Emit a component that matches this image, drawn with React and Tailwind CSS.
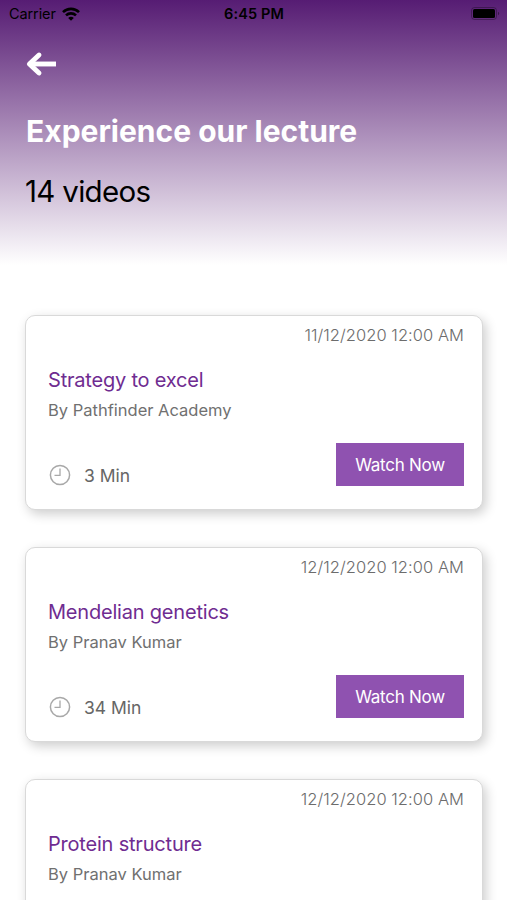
const lectures = [
  { id: 1, title: "Strategy to excel", author: "Pathfinder Academy", date: "11/12/2020 12:00 AM", duration: "3 Min" },
  { id: 2, title: "Mendelian genetics", author: "Pranav Kumar", date: "12/12/2020 12:00 AM", duration: "34 Min" },
  { id: 3, title: "Protein structure", author: "Pranav Kumar", date: "12/12/2020 12:00 AM" },
];

function WifiIcon() {
  return (
    <svg width="18" height="14" viewBox="0 0 18 14" fill="none" stroke="currentColor" strokeWidth="2.6">
      <path d="M1 5.1a11.5 11.5 0 0 1 16 0" />
      <path d="M4 8.4a7.2 7.2 0 0 1 10 0" />
      <path d="M9 13.8 6.2 11a3.9 3.9 0 0 1 5.6 0z" fill="currentColor" stroke="none" />
    </svg>
  );
}

function BatteryIcon() {
  return (
    <svg width="29" height="13" viewBox="0 0 29 13" fill="none">
      <rect x="0.5" y="0.5" width="25" height="12" rx="3" stroke="#000" strokeOpacity="0.3" />
      <rect x="2" y="2" width="22" height="9" rx="1.5" fill="#000" />
      <path d="M27 4.7v3.6c1.6-.6 1.6-3 0-3.6z" fill="#000" fillOpacity="0.4" />
    </svg>
  );
}

function BackIcon() {
  return (
    <svg width="32" height="26" viewBox="0 0 32 26" fill="none" stroke="#fff" strokeWidth="4.9">
      <path d="M31 13H5" />
      <path d="M14 4 4.4 13l9.6 9" strokeLinecap="round" strokeLinejoin="round" />
    </svg>
  );
}

function ClockIcon() {
  return (
    <svg width="22" height="22" viewBox="0 0 22 22" fill="none" stroke="#a8a8a8" strokeWidth="1.5">
      <circle cx="11" cy="11" r="9.6" />
      <path d="M11 4.5V11.3H5.5" strokeWidth="1.3" />
    </svg>
  );
}

function StatusBar() {
  return (
    <div className="grid grid-cols-3 items-center h-[27px] pl-[9px] pr-[7px] text-black">
      <div className="flex items-center gap-1.5">
        <span className="text-[14.5px] tracking-[-0.1px]">Carrier</span>
        <WifiIcon />
      </div>
      <span className="text-center text-[14.5px] tracking-[0.1px] font-semibold -ml-px">6:45 PM</span>
      <div className="flex justify-end">
        <BatteryIcon />
      </div>
    </div>
  );
}

function LectureCard({ lecture }) {
  return (
    <div className="h-[195px] shrink-0 bg-white border border-[#d9d9d9] rounded-[10px] shadow-[3px_4px_12px_rgba(0,0,0,0.2)] pl-[22px] pr-[18px] pt-[7px] flex flex-col">
      <p className="text-right text-[16.5px] tracking-[0.05px] leading-6 font-light text-[#6c6c6c]">{lecture.date}</p>
      <h2 className="mt-[19px] text-[20px] tracking-[-0.2px] leading-7 text-[#6f2c91]">{lecture.title}</h2>
      <p className="mt-1 text-[16.5px] leading-6 text-[#707070]">By {lecture.author}</p>
      {lecture.duration && (
        <div className="mt-[21px] flex justify-between">
          <div className="flex items-center pt-[22px] pl-px gap-[13px] h-[42px]">
            <ClockIcon />
            <span className="pt-0.5 text-[17.5px] text-[#666666]">{lecture.duration}</span>
          </div>
          <button className="w-[128px] h-[43px] pt-0.5 bg-[#8f52b0] text-white text-[17px] tracking-[-0.25px]">Watch Now</button>
        </div>
      )}
    </div>
  );
}

export default function App() {
  return (
    <div className="h-[900px] overflow-hidden bg-white font-[Inter,sans-serif] flex flex-col">
      <header className="h-[315px] shrink-0 bg-[linear-gradient(to_bottom,#561c73_0px,#9671a8_100px,#ffffff_265px)]">
        <StatusBar />
        <div className="px-[25px] pt-6">
          <BackIcon />
          <h1 className="mt-[34px] pl-px text-[30px] leading-10 font-bold text-white">Experience our lecture</h1>
          <p className="mt-5 text-[29.5px] tracking-[-0.7px] leading-10 text-black">14 videos</p>
        </div>
      </header>
      <main className="flex flex-col gap-[37px] pl-[25px] pr-6">
        {lectures.map((lecture) => (
          <LectureCard key={lecture.id} lecture={lecture} />
        ))}
      </main>
    </div>
  );
}
